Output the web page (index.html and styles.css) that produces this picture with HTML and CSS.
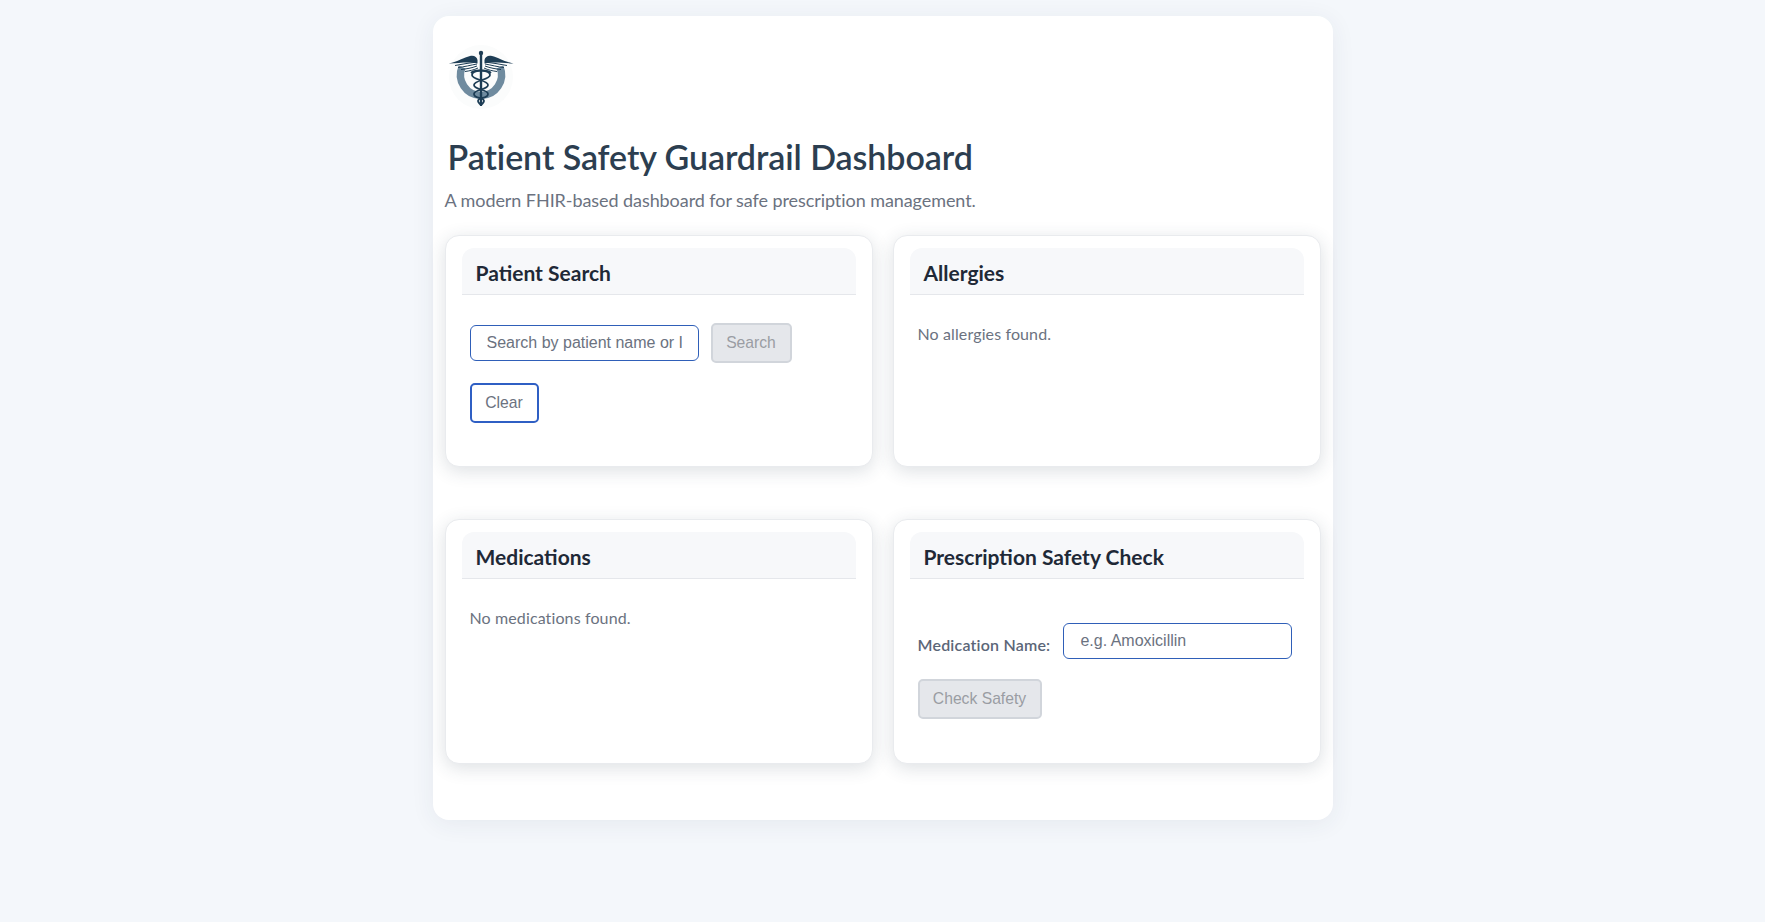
FILE: index.html
```html
<!DOCTYPE html>
<html lang="en">
<head>
<meta charset="utf-8">
<title>Patient Safety Guardrail Dashboard</title>
<link rel="stylesheet" href="styles.css">
</head>
<body>
<main class="container">
  <svg class="logo" viewBox="0 0 66 66" width="66" height="66" aria-label="Caduceus logo">
    <circle class="halo" cx="33" cy="32" r="32"/>
    <path class="ring" d="M14.1 22 A20.5 20.5 0 1 0 51.9 22"/>
    <g class="feathers">
      <path d="M29 17 C22 18 14 19 7 20.5"/>
      <path d="M29 19 C23 20 16 22 10 22.5"/>
      <path d="M29 21 C24 23 18 24 13 24.5"/>
      <path d="M30 23 C26 25 21 26 17 26.5"/>
      <path d="M37 17 C44 18 52 19 59 20.5"/>
      <path d="M37 19 C43 20 50 22 56 22.5"/>
      <path d="M37 21 C42 23 48 24 53 24.5"/>
      <path d="M36 23 C40 25 45 26 49 26.5"/>
    </g>
    <path class="wing" d="M0.5 18.5 C10 16.5 16 12.5 22 11 C26 10 29 12 29.5 15 L29.5 18.5 C22 16.5 12 18 0.5 18.5 Z"/>
    <path class="wing" d="M65.5 18.5 C56 16.5 50 12.5 44 11 C40 10 37 12 36.5 15 L36.5 18.5 C44 16.5 54 18 65.5 18.5 Z"/>
    <rect class="rod" x="31.8" y="9" width="2.4" height="50"/>
    <circle class="wing" cx="33" cy="8" r="2.2"/>
    <path class="snake" d="M23 28 C27 24 42 25 42 30 C42 35 26 35 26 40 C26 45 40 44 40 49 C40 54 30 52 30 56 C30 58 33 59 33 61"/>
    <path class="snake" d="M43 28 C39 24 24 25 24 30 C24 35 40 35 40 40 C40 45 26 44 26 49 C26 54 36 52 36 56 C36 58 33 59 33 61"/>
  </svg>
  <h1 class="title">Patient Safety Guardrail Dashboard</h1>
  <p class="subtitle">A modern FHIR-based dashboard for safe prescription management.</p>
  <div class="grid">
    <section class="card">
      <h2 class="card-head">Patient Search</h2>
      <div class="card-body search-body">
        <input class="text-input" type="text" placeholder="Search by patient name or ID">
        <button class="btn btn-disabled btn-search" type="button" disabled>Search</button>
        <button class="btn btn-outline" type="button">Clear</button>
      </div>
    </section>
    <section class="card">
      <h2 class="card-head">Allergies</h2>
      <div class="card-body"><p class="empty">No allergies found.</p></div>
    </section>
    <section class="card">
      <h2 class="card-head">Medications</h2>
      <div class="card-body"><p class="empty">No medications found.</p></div>
    </section>
    <section class="card">
      <h2 class="card-head">Prescription Safety Check</h2>
      <div class="card-body check-body">
        <div class="field">
          <label class="field-label" for="med">Medication Name:</label>
          <input class="text-input" id="med" type="text" placeholder="e.g. Amoxicillin">
        </div>
        <button class="btn btn-disabled btn-check" type="button" disabled>Check Safety</button>
      </div>
    </section>
  </div>
</main>
</body>
</html>
```
FILE: styles.css
```css
* { box-sizing: border-box; }
html, body { margin: 0; padding: 0; }
body {
  background: #f4f7fb;
  font-family: "Lato", "Open Sans", sans-serif;
  min-height: 922px;
  padding-top: 16px;
}
.container {
  width: 900px;
  height: 804px;
  margin: 0 auto;
  padding: 29px 12px 0;
  background: #fff;
  border-radius: 16px;
  box-shadow: 0 4px 24px rgba(44, 62, 80, 0.07);
}
.logo { display: block; margin-left: 3px; }
.halo { fill: #fbfcfc; }
.ring { fill: none; stroke: #6f8b9f; stroke-width: 7.5; }
.wing { fill: #1d3d55; }
.rod { fill: #1d3d55; }
.feathers path { fill: none; stroke: #1d3d55; stroke-width: 1; }
.snake { fill: none; stroke: #1d3d55; stroke-width: 1.8; }
.title {
  margin: 23px 0 0 3px;
  font-size: 34px;
  line-height: 46px;
  font-weight: 600;
  letter-spacing: -0.07px;
  color: #2c3e50;
}
.subtitle {
  margin: 8px 0 0;
  font-size: 18px;
  line-height: 24px;
  letter-spacing: -0.07px;
  color: #6b7280;
}
.grid {
  display: grid;
  grid-template-columns: 428px 428px;
  grid-template-rows: 232px 245px;
  column-gap: 20px;
  row-gap: 52px;
  margin-top: 23px;
}
.card {
  background: #fff;
  border: 1px solid #e9ebee;
  border-radius: 14px;
  padding: 12px 16px;
  box-shadow: 0 4px 18px rgba(44, 62, 80, 0.16);
}
.card-head {
  margin: 0;
  padding: 11px 14px 8px;
  height: 47px;
  font-size: 21px;
  line-height: 27px;
  font-weight: 700;
  color: #1f2937;
  background: #f7f8fa;
  border-bottom: 1px solid #e5e7eb;
  border-radius: 12px 12px 0 0;
}
.card-body { padding: 0 8px; }
.empty {
  margin: 28px 0 0;
  font-size: 16px;
  line-height: 22px;
  letter-spacing: 0.12px;
  color: #6b7280;
}
.text-input {
  width: 229px;
  height: 36px;
  padding: 0 16px;
  font-family: "Liberation Sans", Arial, sans-serif;
  font-size: 16px;
  border: 1px solid #2f5fb8;
  border-radius: 6px;
  outline: none;
  background: #fff;
}
.text-input::placeholder { color: #6b7280; opacity: 1; }
.btn {
  font-family: "Liberation Sans", Arial, sans-serif;
  font-size: 15.7px;
  height: 40px;
  padding: 0;
  border-radius: 5px;
  background: #fff;
  white-space: nowrap;
}
.btn-disabled {
  background: #e5e7eb;
  border: 2px solid #d1d5db;
  color: #9a9da3;
}
.btn-outline {
  border: 2px solid #2f5fc4;
  color: #6b7280;
}
.search-body {
  display: flex;
  flex-wrap: wrap;
  align-items: center;
  row-gap: 20px;
  column-gap: 12px;
  padding-top: 28px;
}
.btn-search { width: 81px; }
.btn-outline { width: 69px; }
.check-body { padding: 44px 0 0 8px; }
.field {
  display: flex;
  align-items: flex-start;
  gap: 13px;
  margin-bottom: 20px;
}
.field-label {
  padding-top: 11px;
  font-size: 16px;
  line-height: 22px;
  font-weight: 600;
  letter-spacing: 0.2px;
  color: #5b6678;
}
.btn-check { width: 124px; }
```
